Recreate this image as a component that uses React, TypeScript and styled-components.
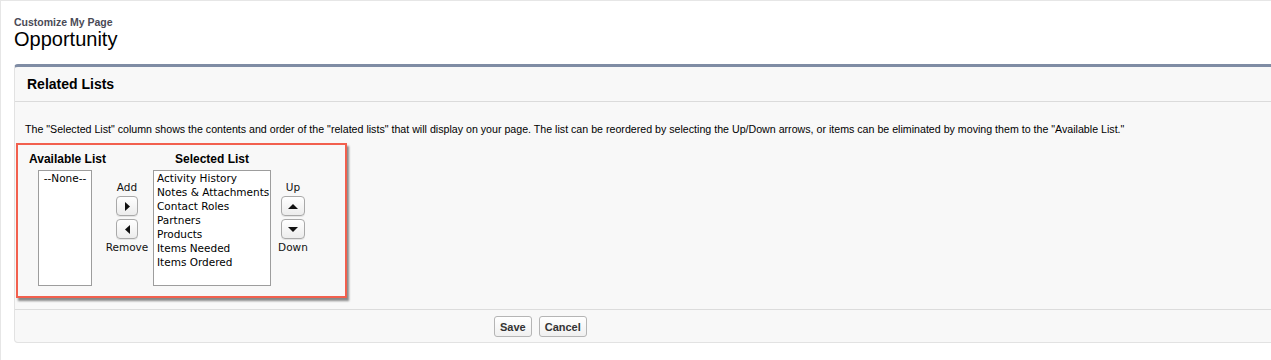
import styled, { createGlobalStyle } from "styled-components";

const GlobalStyle = createGlobalStyle`
    html, body {
        margin: 0;
        padding: 0;
        background: #fff;
        font-family: "Liberation Sans", Arial, sans-serif;
        color: #000;
    }
`;

const Page = styled.div`
    width: 1271px;
    height: 360px;
    box-sizing: border-box;
    border-left: 1px solid #e6e6e6;
    border-top: 1px solid #e6e6e6;
    padding: 15px 0 0 13px;
    overflow: hidden;
`;

const PageType = styled.div`
    font-size: 10.5px;
    font-weight: 700;
    color: #4a4a56;
    line-height: 13px;
`;

const PageTitle = styled.h1`
    margin: 0;
    font-size: 20px;
    font-weight: 400;
    line-height: 20px;
    color: #000;
`;

const Panel = styled.div`
    margin-top: 15px;
    margin-right: -12px;
    background: #f8f8f8;
    border: 1px solid #e2e2e2;
    border-top: 3px solid #7f8ca4;
    border-radius: 4px;
`;

const PanelHeader = styled.div`
    height: 34px;
    display: flex;
    align-items: center;
    padding-left: 12px;
    border-bottom: 1px solid #dbdbdb;
    font-size: 14px;
    font-weight: 700;
`;

const PanelBody = styled.div`
    padding: 20px 0 11px 1px;
`;

const Description = styled.p`
    margin: 0 0 7px 9px;
    font-size: 10.65px;
    line-height: 14px;
    color: #000;
`;

const Highlight = styled.div`
    display: inline-grid;
    grid-template-columns: 72px 52px 118px 44px;
    grid-template-rows: auto auto;
    padding: 7px 30px 10px 11px;
    border: 2px solid #f2604e;
    box-shadow: 2px 3px 2px rgba(0, 0, 0, 0.45);
`;

const ColLabel = styled.div`
    font-size: 12px;
    font-weight: 700;
    text-align: center;
    line-height: 14px;
    margin-bottom: 4px;
    white-space: nowrap;
`;

const ListBox = styled.div<{ $width: number }>`
    width: ${(p) => p.$width}px;
    height: 116px;
    justify-self: center;
    background: #fff;
    border: 1px solid #9d9d9d;
    padding: 0 3px;
    box-sizing: border-box;
    font-family: "DejaVu Sans", "Liberation Sans", sans-serif;
    font-size: 10.5px;
    line-height: 14px;
`;

const ListItem = styled.div<{ $center?: boolean }>`
    white-space: nowrap;
    text-align: ${(p) => (p.$center ? "center" : "left")};
`;

const Mover = styled.div`
    display: flex;
    flex-direction: column;
    align-items: center;
    padding-top: 10px;
    font-family: "DejaVu Sans", "Liberation Sans", sans-serif;
    font-size: 10.5px;
    line-height: 14px;
    color: #111;
`;

const MoveButton = styled.button<{ $wide?: boolean }>`
    width: ${(p) => (p.$wide ? 24 : 22)}px;
    height: 20px;
    margin: 2px 0 1px;
    padding: 0;
    display: flex;
    align-items: center;
    justify-content: center;
    background: linear-gradient(#ffffff, #ececec);
    border: 1px solid #a9a9a9;
    border-radius: 4px;
    box-shadow: 0 1px 0 rgba(0, 0, 0, 0.08);
`;

const Footer = styled.div`
    border-top: 1px solid #dcdcdc;
    padding: 6px 0 5px 479px;
    display: flex;
    gap: 7px;
`;

const FormButton = styled.button`
    height: 21px;
    padding: 0 5px;
    font-family: "Liberation Sans", Arial, sans-serif;
    font-size: 11px;
    font-weight: 700;
    color: #333;
    background: linear-gradient(#ffffff, #f0f0f0);
    border: 1px solid #b5b5b5;
    border-radius: 3px;
`;

const Arrow = ({ dir }: { dir: "left" | "right" | "up" | "down" }) => {
    const points = {
        right: "2,0 7,4.5 2,9",
        left: "7,0 2,4.5 7,9",
        up: "0,7 5,2 10,7",
        down: "0,2 5,7 10,2",
    }[dir];
    const w = dir === "up" || dir === "down" ? 10 : 9;
    return (
        <svg width={w} height={9} viewBox={`0 0 ${w} 9`}>
            <polygon points={points} fill="#111" />
        </svg>
    );
};

const selected = [
    "Activity History",
    "Notes & Attachments",
    "Contact Roles",
    "Partners",
    "Products",
    "Items Needed",
    "Items Ordered",
];

const App = () => {
    return (
        <Page>
            <GlobalStyle />
            <PageType>Customize My Page</PageType>
            <PageTitle>Opportunity</PageTitle>

            <Panel>
                <PanelHeader>Related Lists</PanelHeader>
                <PanelBody>
                    <Description>
                        The "Selected List" column shows the contents and order of the "related lists" that will display on your page. The list can be reordered by selecting the Up/Down arrows, or items can be eliminated by moving them to the "Available List."
                    </Description>

                    <Highlight>
                        <ColLabel>Available List</ColLabel>
                        <div />
                        <ColLabel>Selected List</ColLabel>
                        <div />

                        <ListBox $width={54}>
                            <ListItem $center>--None--</ListItem>
                        </ListBox>
                        <Mover>
                            Add
                            <MoveButton><Arrow dir="right" /></MoveButton>
                            <MoveButton><Arrow dir="left" /></MoveButton>
                            Remove
                        </Mover>
                        <ListBox $width={118}>
                            {selected.map((item) => (
                                <ListItem key={item}>{item}</ListItem>
                            ))}
                        </ListBox>
                        <Mover>
                            Up
                            <MoveButton $wide><Arrow dir="up" /></MoveButton>
                            <MoveButton $wide><Arrow dir="down" /></MoveButton>
                            Down
                        </Mover>
                    </Highlight>
                </PanelBody>
                <Footer>
                    <FormButton>Save</FormButton>
                    <FormButton>Cancel</FormButton>
                </Footer>
            </Panel>
        </Page>
    );
};

export default App;
